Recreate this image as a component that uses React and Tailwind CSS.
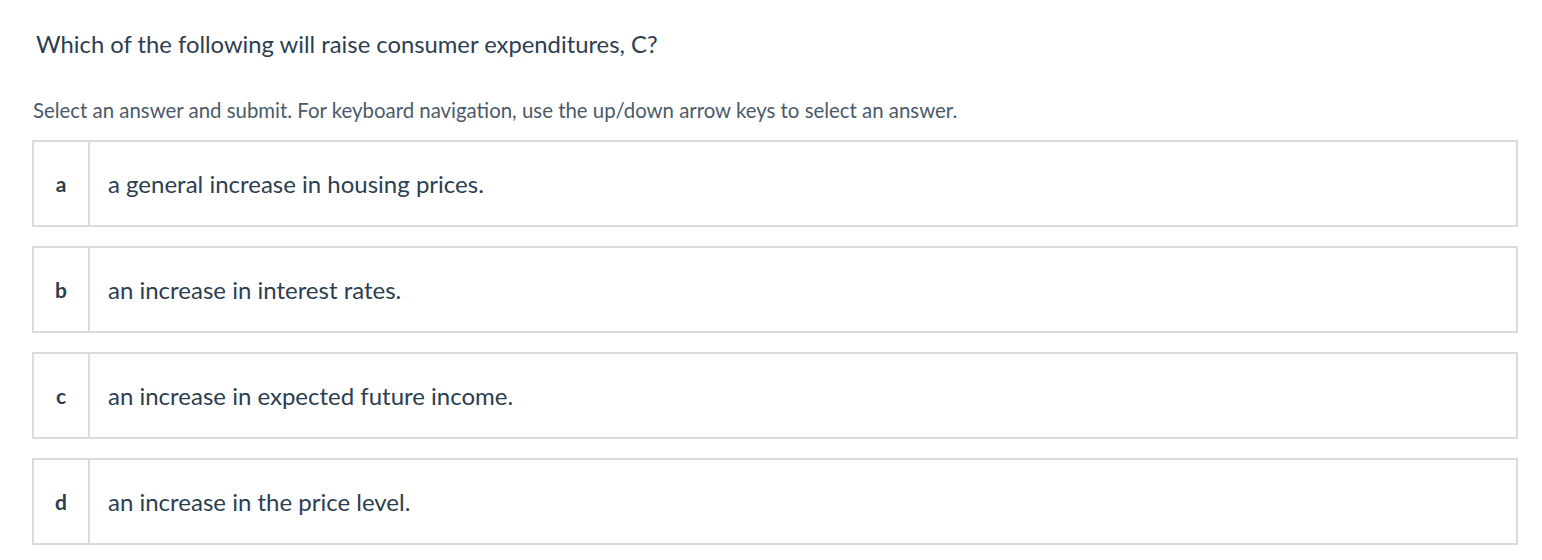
const options = [
  { key: 'a', text: 'a general increase in housing prices.' },
  { key: 'b', text: 'an increase in interest rates.' },
  { key: 'c', text: 'an increase in expected future income.' },
  { key: 'd', text: 'an increase in the price level.' },
];

export default function App() {
  return (
    <div className="min-h-[560px] bg-white pl-[32px] pr-[24px] pt-[28px] text-[#2c3e50] font-['Lato','Open_Sans',sans-serif]">
      <h2 className="pl-[4px] text-[23.8px] leading-[32px] font-normal">
        Which of the following will raise consumer expenditures, C?
      </h2>
      <p className="mt-[38px] pl-[1px] text-[20.4px] leading-[24px] text-[#4a5a6a]">
        Select an answer and submit. For keyboard navigation, use the up/down arrow keys to select an answer.
      </p>
      <div className="mt-[18px] flex flex-col gap-[19px]" role="radiogroup">
        {options.map((opt) => (
          <div
            key={opt.key}
            role="radio"
            aria-checked="false"
            className="flex h-[87px] items-stretch border-2 border-[#d9dcdf] bg-white"
          >
            <div className="flex w-[56px] shrink-0 items-center justify-center border-r-2 border-[#d9dcdf] text-[21px] font-bold">
              {opt.key}
            </div>
            <div className="flex items-center pl-[18px] text-[24px]">{opt.text}</div>
          </div>
        ))}
      </div>
    </div>
  );
}
